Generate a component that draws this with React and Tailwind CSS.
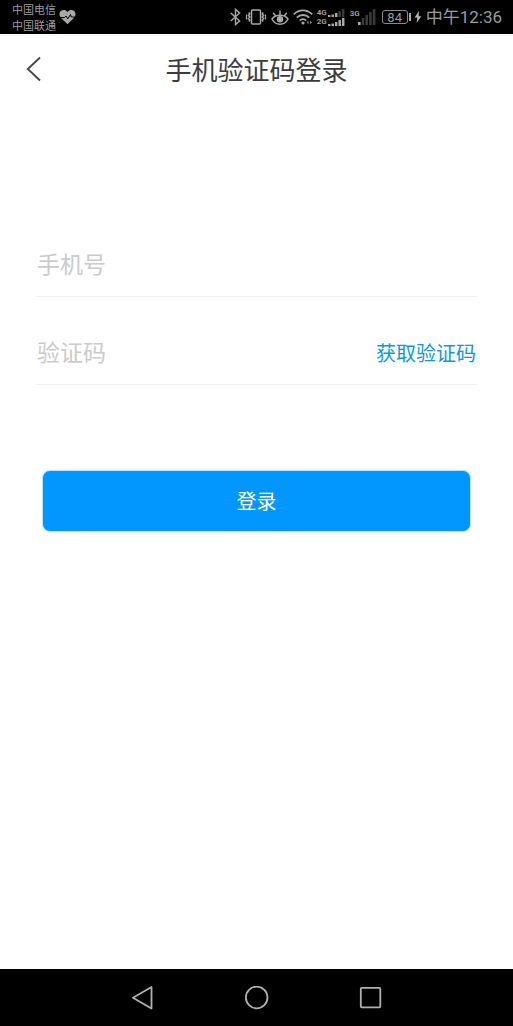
import { useState } from 'react'

function SignalBars({ heights, dim = 0, className }) {
  return (
    <svg viewBox="0 0 18 16" preserveAspectRatio="none" className={className} aria-hidden="true">
      {heights.map((h, i) => (
        <rect key={i} x={i * 3.7} y={16 - h} width="2.6" height={h} fill={i >= heights.length - dim ? '#3a3a3a' : '#a8a8a8'} />
      ))}
    </svg>
  )
}

function StatusBar() {
  return (
    <div className="flex h-[34px] shrink-0 items-center justify-between bg-black pl-3 pr-[11px] text-[#9b9b9b]">
      <div className="flex items-center gap-[3px]">
        <div className="text-[11px] leading-4">
          <p>中国电信</p>
          <p>中国联通</p>
        </div>
        <svg viewBox="0 0 17 16" className="h-4 w-[17px]" aria-hidden="true">
          <path d="M8.5 15.3 1.6 8.4C-.1 6.4.2 3.6 1.8 2 3.8.3 6.9.5 8.5 2.9 10.1.5 13.2.3 15.2 2c1.6 1.6 1.9 4.4.2 6.4Z" fill="#a8a8a8" />
          <path d="M0 8.5h5.5L7 7l1.8 2.8L11.5 5.5l.8 2.5H17" fill="none" stroke="#000" strokeWidth="1" />
        </svg>
      </div>

      <div className="flex items-center">
        <svg viewBox="0 0 11 18" className="h-[18px] w-[11px]" fill="none" stroke="#a8a8a8" strokeWidth="1.4" aria-hidden="true">
          <path d="M.8 5 9.6 13 5.5 16.6V1.4L9.6 5 .8 13" />
        </svg>
        <svg viewBox="0 0 22 18" className="ml-1 h-[18px] w-[22px]" fill="none" stroke="#a8a8a8" strokeWidth="1.5" aria-hidden="true">
          <rect x="6.5" y="2" width="9" height="14" rx="1" />
          <path d="M3.8 4.5 4.8 6 3.4 7.5 4.8 9 3.4 10.5 4.8 12l-1 1.5M18.2 4.5l-1 1.5 1.4 1.5L17.2 9l1.4 1.5-1.4 1.5 1 1.5" />
          <path d="M1.5 6.5v5M20.5 6.5v5" strokeWidth="1.2" />
        </svg>
        <svg viewBox="0 0 18 18" className="ml-1 h-[18px] w-[18px]" fill="none" stroke="#a8a8a8" strokeWidth="1.5" aria-hidden="true">
          <path d="M1 11C4.500 6 13.500 6 17 11 13.500 18 4.500 18 1 11Z" />
          <circle cx="9" cy="11.2" r="3.2" fill="#a8a8a8" stroke="none" />
          <path d="M9 7V2.5M4.500 7.800 2.200 4.800M13.500 7.800 15.800 4.800" />
        </svg>
        <svg viewBox="0 0 20 18" className="ml-1 h-[18px] w-5" fill="none" stroke="#a8a8a8" strokeWidth="1.9" aria-hidden="true">
          <path d="M.8 6.3C6 1 14 1 19.2 6.3M3.800 9.600c3.500-3.500 8.900-3.500 12.400 0M6.800 12.600c1.800-1.800 4.600-1.800 6.400 0" />
          <circle cx="10" cy="15" r="1.600" fill="#a8a8a8" stroke="none" />
          <path d="m15.500 12.500-2 2 2 2ZM17 12.500l2 2-2 2Z" fill="#777" stroke="none" />
        </svg>
        <div className="ml-1 font-['Roboto',sans-serif] text-[8px] font-bold leading-[9px]">
          <div className="flex items-center gap-px">
            <span className="w-[10px]">4G</span>
            <SignalBars heights={[4, 5, 8, 12, 16]} dim={2} className="h-2 w-[17px]" />
          </div>
          <div className="flex items-center gap-px">
            <span className="w-[10px]">2G</span>
            <SignalBars heights={[4, 5, 8, 12, 16]} className="h-2 w-[17px]" />
          </div>
        </div>
        <div className="ml-[5px] flex h-4 items-start font-['Roboto',sans-serif] text-[8px] font-bold leading-[9px]">
          <span className="w-2">3G</span>
          <SignalBars heights={[3, 7, 10, 13, 16]} dim={4} className="h-4 w-[18px]" />
        </div>
        <div className="ml-[6px] flex h-[14px] w-[26px] items-center justify-center rounded-[3px] border border-[#8a8a8a] font-['Roboto',sans-serif] text-[13px] leading-none">84</div>
        <span className="ml-px h-2 w-[2px] bg-[#a8a8a8]" />
        <svg viewBox="0 0 8 14" className="ml-[3px] h-[14px] w-2" aria-hidden="true">
          <path d="M5 1 .6 7.600h2.600L2.600 13 7.400 6.200H4.600Z" fill="#b5b5b5" />
        </svg>
        <span className="ml-1 font-['Roboto','Noto_Sans_CJK_SC',sans-serif] text-[17px] leading-none">中午12:36</span>
      </div>
    </div>
  )
}

function Header() {
  return (
    <header className="grid h-[70px] shrink-0 grid-cols-[60px_1fr_60px] items-center text-[#3c3c3c]">
      <button type="button" aria-label="返回" className="flex h-full items-center pl-[26px]">
        <svg viewBox="0 0 16 26" className="h-[26px] w-4" fill="none" stroke="#444" strokeWidth="1.8">
          <path d="M14 1.5 1.8 13 14 24.5" />
        </svg>
      </button>
      <h1 className="text-center text-[26px] leading-8">手机验证码登录</h1>
    </header>
  )
}

function Field({ label, value, onChange, children }) {
  return (
    <div className="flex h-[88px] items-center border-b border-[#f0f0f0] px-px pt-6">
      <input
        type="tel"
        aria-label={label}
        placeholder={label}
        value={value}
        onChange={(e) => onChange(e.target.value)}
        className="h-10 min-w-0 flex-1 bg-transparent pb-1 text-[23px] leading-9 text-[#333] outline-none placeholder:text-[#cbcbcb]"
      />
      {children}
    </div>
  )
}

function NavBar() {
  return (
    <nav className="flex h-[57px] shrink-0 items-center justify-center gap-[90px] bg-black">
      <button type="button" aria-label="后退">
        <svg viewBox="0 0 24 24" className="size-6" fill="none" stroke="#b0b0b0" strokeWidth="1.8" strokeLinejoin="round">
          <path d="M20.5 1v21.500L2 11.700Z" />
        </svg>
      </button>
      <button type="button" aria-label="主屏幕">
        <svg viewBox="0 0 24 24" className="size-6" fill="none" stroke="#b0b0b0" strokeWidth="1.8">
          <circle cx="11.7" cy="11.5" r="10.8" />
        </svg>
      </button>
      <button type="button" aria-label="最近任务">
        <svg viewBox="0 0 24 24" className="size-6" fill="none" stroke="#b0b0b0" strokeWidth="1.8">
          <rect x="1.8" y="1.8" width="19.5" height="19.5" rx="1" />
        </svg>
      </button>
    </nav>
  )
}

function App() {
  const [phone, setPhone] = useState('')
  const [code, setCode] = useState('')

  return (
    <div className="flex min-h-screen flex-col bg-white font-['Noto_Sans_CJK_SC',sans-serif]">
      <StatusBar />
      <Header />
      <main className="flex-1 px-9 pt-[105px]">
        <form onSubmit={(e) => e.preventDefault()}>
          <Field label="手机号" value={phone} onChange={setPhone} />
          <Field label="验证码" value={code} onChange={setCode}>
            <button type="button" className="text-[20px] text-[#1296db]">获取验证码</button>
          </Field>
          <div className="px-[6px] pt-[85px]">
            <button type="submit" className="h-[62px] w-full rounded-lg border border-[#bfe2fb] bg-[#0197ff] text-[20px] text-white">
              登录
            </button>
          </div>
        </form>
      </main>
      <NavBar />
    </div>
  )
}

export default App
